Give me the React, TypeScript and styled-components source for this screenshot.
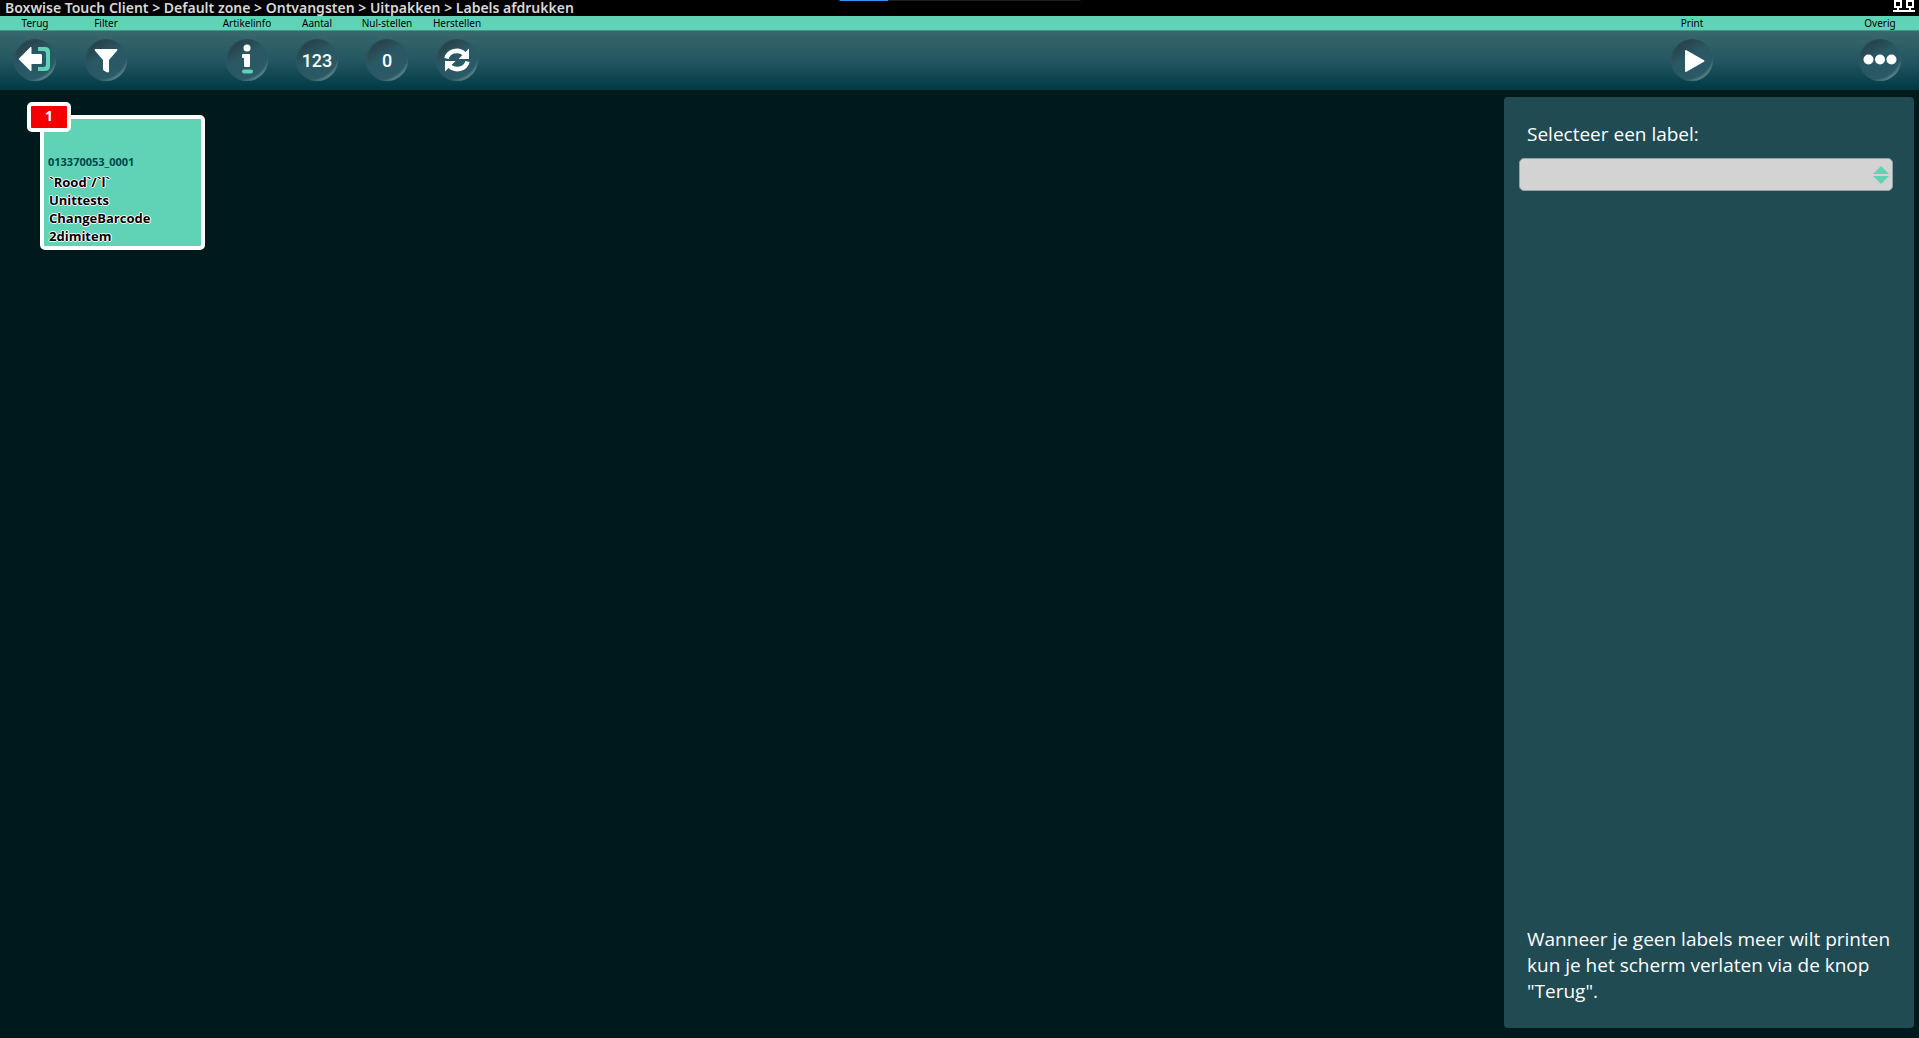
import React from 'react';
import styled, { createGlobalStyle } from 'styled-components';

const GlobalStyle = createGlobalStyle`
  * { box-sizing: border-box; }
  body { margin: 0; background: #00191d; }
`;

const mint = '#60d3b7';
const uiFont = '"Noto Sans", "Open Sans", sans-serif';
const textFont = '"Open Sans", "Noto Sans", sans-serif';

const Screen = styled.div`
  display: flex;
  flex-direction: column;
  min-height: 100vh;
  background: #00191d;
  font-family: ${uiFont};
`;

const TitleBar = styled.header`
  position: relative;
  display: flex;
  align-items: center;
  justify-content: space-between;
  height: 16px;
  padding: 0 4px 0 5px;
  background: #000;
`;

const Breadcrumb = styled.h1`
  margin: 0;
  color: #d8d8d8;
  font-size: 14px;
  font-weight: 600;
  line-height: 16px;
  white-space: nowrap;
`;

const Progress = styled.div`
  position: absolute;
  top: 0;
  left: 50%;
  width: 241px;
  height: 1px;
  transform: translateX(-50%);
  background: linear-gradient(to right, #3794f5 20%, #1e1e1e 20%);
`;

const NetworkIcon = styled.svg`
  width: 22px;
  height: 12px;
  align-self: flex-start;
`;

const Toolbar = styled.nav`
  display: flex;
  height: 74px;
  padding: 0 4px 0 0;
  background: linear-gradient(
    to bottom,
    ${mint} 14px,
    #459687 14px,
    #459687 15px,
    #39686c 15px,
    #235661 45px,
    #003a44 74px
  );
`;

const Group = styled.div<{ $gap?: number }>`
  display: flex;
  margin-right: ${(p) => p.$gap ?? 0}px;
`;

const Spacer = styled.div`
  flex: 1;
`;

const ToolButton = styled.button`
  display: flex;
  flex-direction: column;
  align-items: center;
  gap: 8px;
  width: 70px;
  height: 74px;
  padding: 0;
  border: 0;
  background: none;
  color: #000;
  font-family: ${uiFont};
  font-size: 10px;
  line-height: 15px;
  white-space: nowrap;
  cursor: pointer;
`;

const Orb = styled.span`
  display: grid;
  place-items: center;
  width: 42px;
  height: 42px;
  border-radius: 50%;
  background:
    radial-gradient(circle at 15px 13px, transparent 27px, rgba(190, 212, 215, 0.75) 34px),
    linear-gradient(150deg, #29444c 18%, #2a5864 42%, #2a5b67 100%);
  box-shadow: inset 1px 0 2px #2b5863, 0 0 1px #3b6a74;
  color: #fff;
  font-family: Roboto, sans-serif;
  font-size: 18px;
  font-weight: 500;

  svg {
    width: 42px;
    height: 42px;
  }
`;

const Main = styled.main`
  display: flex;
  flex: 1;
  align-items: stretch;
  padding: 7px 5px 10px 0;
`;

const Board = styled.section`
  flex: 1;
  padding: 18px 40px;
`;

const Card = styled.button`
  position: relative;
  display: flex;
  flex-direction: column;
  justify-content: flex-end;
  width: 165px;
  height: 135px;
  padding: 0 4px 1px;
  border: 4px solid #fff;
  border-radius: 5px;
  background: ${mint};
  font-family: ${textFont};
  text-align: left;
  cursor: pointer;
`;

const Badge = styled.span`
  position: absolute;
  top: -17px;
  left: -17px;
  width: 44px;
  height: 30px;
  border: 4px solid #fff;
  border-radius: 5px;
  background: #f50000;
  color: #fff;
  font-size: 14px;
  font-weight: 700;
  line-height: 20px;
  text-align: center;
`;

const CardCode = styled.span`
  margin-bottom: 2px;
  color: #00434d;
  font-size: 11px;
  font-weight: 700;
  line-height: 18px;
`;

const CardLine = styled.span`
  padding-left: 1px;
  color: #000;
  font-size: 13px;
  font-weight: 700;
  line-height: 18px;
  text-shadow: 1px 0 #fff, -1px 0 #fff, 0 1px #fff, 0 -1px #fff;
`;

const Panel = styled.aside`
  display: flex;
  flex-direction: column;
  width: 410px;
  padding: 24px 21px 24px 15px;
  border-radius: 4px;
  background: #204b53;
  color: #fff;
  font-family: ${textFont};
  font-size: 19px;
  line-height: 26px;
`;

const PanelLabel = styled.label`
  padding-left: 8px;
`;

const SelectWrap = styled.div`
  position: relative;
  margin-top: 11px;
`;

const Select = styled.select`
  display: block;
  width: 100%;
  height: 33px;
  padding: 0 28px 0 8px;
  appearance: none;
  border: 1px solid #91a3a6;
  border-radius: 5px;
  background: #d3d3d3;
  font-size: 18px;
`;

const SelectArrows = styled.svg`
  position: absolute;
  top: 8px;
  right: 4px;
  width: 16px;
  height: 18px;
  pointer-events: none;
`;

const Hint = styled.p`
  margin: auto 0 0;
  padding-left: 8px;
  white-space: pre-line;
`;

const BackIcon = () => (
  <svg viewBox="0 0 42 42">
    <path d="M24 8h7q5 0 5 5v14q0 5-5 5h-7v-4h5.500q2.500 0 2.500-2.500v-11q0-2.500-2.500-2.500H24z" fill={mint} />
    <path d="M4.500 20 16 8.500q1.500-1.500 1.500 0.500v6h9q1.500 0 1.500 1.500v7q0 1.500-1.500 1.500h-9v6q0 2-1.500 0.500z" fill="#fff" />
  </svg>
);

const FilterIcon = () => (
  <svg viewBox="0 0 42 42">
    <path d="M10.500 10h21q1.500 0 .7 1.500L24 21v11q0 2-2 1.300l-3-1.600q-1-.7-1-2V21l-8.200-9.500Q9 10 10.500 10z" fill="#fff" />
  </svg>
);

const InfoIcon = () => (
  <svg viewBox="0 0 42 42">
    <circle cx="21" cy="9" r="3.500" fill="#fff" />
    <path d="M17 15h6q1 0 1 1v11q0 1-1 1h-4q-1 0-1-1v-8h-1q-1 0-1-1v-2q0-1 1-1z" fill="#fff" />
    <rect x="16" y="30.500" width="11" height="4" rx="2" fill={mint} />
  </svg>
);

const RefreshIcon = () => (
  <svg viewBox="0 0 42 42">
    <g fill="none" stroke="#fff" strokeWidth="4.500">
      <path d="M10.500 19.500a10.500 9.500 0 0 1 18-4.500" />
      <path d="M31.500 22.500a10.500 9.500 0 0 1-18 4.500" />
    </g>
    <path d="M33 9.500V20H22.500zM9 32.500V22h10.500z" fill="#fff" />
  </svg>
);

const PlayIcon = () => (
  <svg viewBox="0 0 42 42">
    <path d="M15 12v20l17.500-10z" fill="#fff" stroke="#fff" strokeWidth="2" strokeLinejoin="round" />
  </svg>
);

const MoreIcon = () => (
  <svg viewBox="0 0 42 42" fill="#fff">
    <circle cx="9.500" cy="20.500" r="5" />
    <circle cx="21" cy="20.500" r="5" />
    <circle cx="32.500" cy="20.500" r="5" />
  </svg>
);

const Tool = ({ label, children }: { label: string; children: React.ReactNode }) => (
  <ToolButton type="button">
    {label}
    <Orb>{children}</Orb>
  </ToolButton>
);

const itemLines = ['`Rood`/`l`', 'Unittests', 'ChangeBarcode', '2dimitem'];

export default function App() {
  return (
    <Screen>
      <GlobalStyle />
      <TitleBar>
        <Breadcrumb>
          Boxwise Touch Client &gt; Default zone &gt; Ontvangsten &gt; Uitpakken &gt; Labels afdrukken
        </Breadcrumb>
        <Progress />
        <NetworkIcon viewBox="0 0 22 12">
          <path
            d="M2 1h6v6H2zM14 1h6v6h-6zM5 7v4M17 7v4M0 11h22"
            fill="none"
            stroke="#fff"
            strokeWidth="2"
          />
        </NetworkIcon>
      </TitleBar>
      <Toolbar>
        <Group $gap={1}>
          <Tool label="Terug"><BackIcon /></Tool>
        </Group>
        <Group $gap={71}>
          <Tool label="Filter"><FilterIcon /></Tool>
        </Group>
        <Group>
          <Tool label="Artikelinfo"><InfoIcon /></Tool>
          <Tool label="Aantal">123</Tool>
          <Tool label="Nul-stellen">0</Tool>
          <Tool label="Herstellen"><RefreshIcon /></Tool>
        </Group>
        <Spacer />
        <Group $gap={118}>
          <Tool label="Print"><PlayIcon /></Tool>
        </Group>
        <Tool label="Overig"><MoreIcon /></Tool>
      </Toolbar>
      <Main>
        <Board>
          <Card type="button">
            <Badge>1</Badge>
            <CardCode>013370053_0001</CardCode>
            {itemLines.map((line) => (
              <CardLine key={line}>{line}</CardLine>
            ))}
          </Card>
        </Board>
        <Panel>
          <PanelLabel htmlFor="label-select">Selecteer een label:</PanelLabel>
          <SelectWrap>
            <Select id="label-select" defaultValue="">
              <option value="" />
            </Select>
            <SelectArrows viewBox="0 0 16 18">
              <path d="M8 0l8 8H0zM0 10h16l-8 8z" fill={mint} />
            </SelectArrows>
          </SelectWrap>
          <Hint>
            {'Wanneer je geen labels meer wilt printen\nkun je het scherm verlaten via de knop\n"Terug".'}
          </Hint>
        </Panel>
      </Main>
    </Screen>
  );
}
